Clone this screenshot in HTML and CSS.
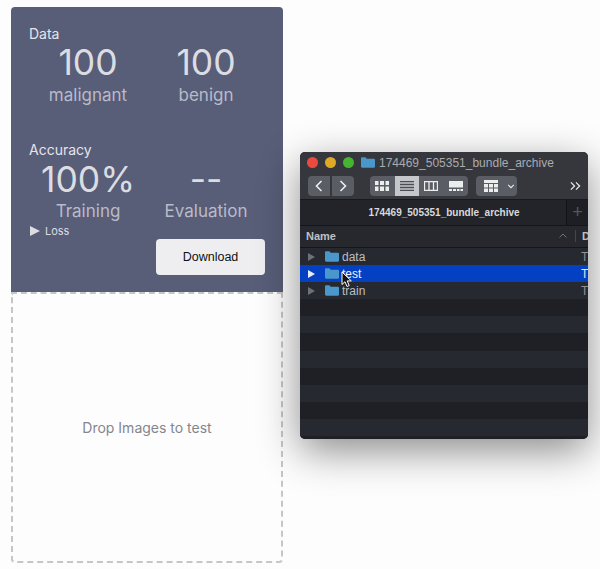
FILE: index.html
```html
<!DOCTYPE html>
<html lang="en">
<head>
  <meta charset="UTF-8">
  <title>Train classifier</title>
  <link rel="stylesheet" href="styles.css">
</head>
<body>
  <div class="column">
    <section class="panel">
      <h2 class="heading">Data</h2>
      <div class="stats">
        <div class="stat"><div class="value">100</div><div class="label">malignant</div></div>
        <div class="stat"><div class="value">100</div><div class="label">benign</div></div>
      </div>

      <h2 class="heading heading-accuracy">Accuracy</h2>
      <div class="stats stats-accuracy">
        <div class="stat"><div class="value">100%</div><div class="label">Training</div></div>
        <div class="stat"><div class="value">--</div><div class="label">Evaluation</div></div>
      </div>

      <div class="footer">
        <div class="loss"><span class="triangle"></span>Loss</div>
        <button type="button" class="download">Download</button>
      </div>
    </section>

    <div class="dropzone">Drop Images to test</div>
  </div>

  <!-- finder window dragged over the page -->
  <div class="finder">
    <div class="titlebar">
      <span class="light red"></span>
      <span class="light yellow"></span>
      <span class="light green"></span>
      <svg class="folder folder-title" viewBox="0 0 14 11"><path d="M0 1.500C0 .7.5.3 1.200.3h3.200l1.300 1.400h7c.8 0 1.300.5 1.300 1.200v6.600c0 .8-.5 1.200-1.300 1.200H1.200C.5 10.700 0 10.300 0 9.500z"/></svg>
      <span class="title">174469_505351_bundle_archive</span>
    </div>

    <div class="toolbar">
      <div class="group nav">
        <span class="tool tool-nav"><svg viewBox="0 0 12 14"><path d="M8.500 2 3.500 7l5 5"/></svg></span>
        <span class="tool tool-nav"><svg viewBox="0 0 12 14"><path d="M3.500 2l5 5-5 5"/></svg></span>
      </div>
      <div class="group views">
        <span class="tool tool-view"><svg viewBox="0 0 14 10" class="fill"><path d="M0 0h3.500v4H0zM5 0h4v4H5zM10.500 0H14v4h-3.500zM0 5.500h3.500V10H0zM5 5.500h4V10H5zM10.500 5.500H14V10h-3.500z"/></svg></span>
        <span class="tool tool-view active"><svg viewBox="0 0 14 10" class="lines"><path d="M0 .5h14M0 3.500h14M0 6.500h14M0 9.500h14"/></svg></span>
        <span class="tool tool-view"><svg viewBox="0 0 14 10" class="thin"><path d="M.5.5h13v9H.5zM5 .5v9M9.500.5v9"/></svg></span>
        <span class="tool tool-view"><svg viewBox="0 0 14 10" class="fill"><path d="M0 0h14v6.500H0zM0 8h3v2H0zM4 8h3v2H4zM8 8h2.500v2H8zM11.500 8H14v2h-2.500z"/></svg></span>
      </div>
      <div class="group sort">
        <svg class="sort-grid fill" viewBox="0 0 14 12"><path d="M0 0h14v3H0zM0 4h4v3.500H0zM5 4h4v3.500H5zM10 4h4v3.500h-4zM0 8.500h4V12H0zM5 8.500h4V12H5zM10 8.500h4V12h-4z"/></svg>
        <svg class="sort-chevron" viewBox="0 0 10 6"><path d="M1.500 1 5 4.500 8.500 1"/></svg>
      </div>
      <svg class="more" viewBox="0 0 12 10"><path d="M1 1l4 4-4 4M6.500 1l4 4-4 4"/></svg>
    </div>

    <div class="tabs">
      <div class="tab">174469_505351_bundle_archive</div>
      <div class="tab-add">+</div>
    </div>

    <div class="columns">
      <span class="col-name">Name</span>
      <svg class="col-sort" viewBox="0 0 8 5"><path d="M.5 4.500 4 1l3.500 3.500"/></svg>
      <span class="col-next">D</span>
    </div>

    <ul class="rows">
      <li class="row"><span class="arrow"></span><svg class="folder" viewBox="0 0 14 11"><path d="M0 1.500C0 .7.5.3 1.200.3h3.200l1.300 1.400h7c.8 0 1.300.5 1.300 1.200v6.600c0 .8-.5 1.200-1.300 1.200H1.200C.5 10.700 0 10.300 0 9.500z"/></svg><span class="name">data</span><span class="kind">T</span></li>
      <li class="row selected"><span class="arrow"></span><svg class="folder" viewBox="0 0 14 11"><path d="M0 1.500C0 .7.5.3 1.200.3h3.200l1.300 1.400h7c.8 0 1.300.5 1.300 1.200v6.600c0 .8-.5 1.200-1.300 1.200H1.200C.5 10.700 0 10.300 0 9.500z"/></svg><span class="name">test</span><span class="kind">T</span>
        <svg class="cursor" viewBox="0 0 11 17"><path d="M1 1v12.500l3-2.800 2 4.800 2.200-1-2-4.600h4.100z"/></svg>
      </li>
      <li class="row"><span class="arrow"></span><svg class="folder" viewBox="0 0 14 11"><path d="M0 1.500C0 .7.5.3 1.200.3h3.200l1.300 1.400h7c.8 0 1.300.5 1.300 1.200v6.600c0 .8-.5 1.200-1.300 1.200H1.200C.5 10.700 0 10.300 0 9.500z"/></svg><span class="name">train</span><span class="kind">T</span></li>
      <li class="row"></li>
      <li class="row"></li>
      <li class="row"></li>
      <li class="row"></li>
      <li class="row"></li>
      <li class="row"></li>
      <li class="row"></li>
      <li class="row"></li>
    </ul>
  </div>
</body>
</html>
```

FILE: styles.css
```css
html, body {
  height: 100%;
}

body {
  margin: 0;
  background: #fdfdfd;
  font-family: Inter, "Liberation Sans", sans-serif;
  overflow: hidden;
}

.column {
  width: 272px;
  margin: 7px 0 0 11px;
}

.panel {
  box-sizing: border-box;
  height: 285px;
  padding: 18px 18px 0;
  background: #585d78;
  border-radius: 4px 4px 0 0;
  color: #e4e5ea;
}

.heading {
  margin: 0;
  font-size: 14px;
  font-weight: 400;
  line-height: 17px;
}

.heading-accuracy {
  margin: 36px 0 1px;
}

.stats {
  display: grid;
  grid-template-columns: 118px 118px;
}

.stat {
  text-align: center;
}

.value {
  font-size: 35.500px;
  font-weight: 400;
  line-height: 42px;
  color: #dcdde3;
}

.label {
  margin-top: 1px;
  font-size: 17px;
  line-height: 20px;
  color: #b9bbc8;
}

.stats-accuracy .label {
  margin-top: 0;
}

.footer {
  display: flex;
  justify-content: space-between;
  align-items: flex-start;
}

.loss {
  display: flex;
  align-items: center;
  gap: 5px;
  margin: 3px 0 0 1px;
  font-size: 11px;
  line-height: 14px;
  color: #dcdde4;
}

.triangle {
  width: 0;
  height: 0;
  border-left: 10px solid #dcdde4;
  border-top: 5px solid transparent;
  border-bottom: 5px solid transparent;
}

.download {
  width: 109px;
  height: 36px;
  margin-top: 18px;
  border: none;
  border-radius: 4px;
  background: #eeeef1;
  color: #111;
  font-family: "Liberation Sans", sans-serif;
  font-size: 12.500px;
}

.dropzone {
  box-sizing: border-box;
  display: flex;
  align-items: center;
  justify-content: center;
  height: 271px;
  border: 2px dashed #c6c6c6;
  border-radius: 0 0 4px 4px;
  font-size: 14px;
  color: #85868d;
}

.finder {
  position: absolute;
  left: 300px;
  top: 152px;
  width: 288px;
  height: 287px;
  display: flex;
  flex-direction: column;
  overflow: hidden;
  background: #1e2026;
  border-radius: 5px;
  box-shadow: 0 12px 40px rgba(0, 0, 0, 0.45);
  font-family: "Liberation Sans", sans-serif;
  color: #d8d9dc;
}

.titlebar {
  display: flex;
  align-items: center;
  height: 21px;
  padding: 0 0 0 7px;
  background: #35373d;
}

.light {
  width: 11px;
  height: 11px;
  margin-right: 7px;
  border-radius: 50%;
}

.red { background: #ec4a41; }
.yellow { background: #e0a925; }
.green { background: #45b52f; }

.folder {
  width: 14px;
  height: 11px;
  fill: #4a97cb;
}

.folder-title {
  margin-right: 4px;
}

.title {
  font-size: 12px;
  color: #a9abb1;
}

.toolbar {
  display: flex;
  align-items: center;
  height: 26px;
  padding: 0 0 0 8px;
  background: #35373d;
}

.toolbar svg {
  fill: none;
  stroke: #eceded;
  stroke-width: 1.300;
}

.toolbar svg.fill {
  fill: #eceded;
  stroke: none;
}

.group {
  display: flex;
  height: 20px;
  border-radius: 4px;
  overflow: hidden;
}

.nav {
  gap: 2px;
  margin-right: 16px;
}

.tool {
  display: flex;
  align-items: center;
  justify-content: center;
  height: 20px;
  background: #5b5d64;
}

.tool-nav {
  width: 22px;
}

.tool-nav svg {
  width: 12px;
  height: 14px;
  stroke-width: 1.600;
}

.tool-view {
  width: 24.500px;
}

.tool-view svg {
  width: 14px;
  height: 10px;
}

.tool-view.active {
  background: #c6c7ca;
}

.tool-view.active svg {
  stroke: #4b4d53;
}

.views {
  margin-right: 8px;
}

.sort {
  align-items: center;
  gap: 9px;
  width: 41px;
  padding-left: 8px;
  box-sizing: border-box;
  background: #5b5d64;
}

.sort-grid {
  width: 14px;
  height: 12px;
  flex: none;
}

.sort-chevron {
  width: 8px;
  height: 5px;
  flex: none;
}

.more {
  width: 11px;
  height: 10px;
  margin-left: 53px;
}

.tabs {
  display: flex;
  height: 26px;
  background: #22242a;
  border-top: 1px solid #19191c;
  box-sizing: border-box;
}

.tab {
  flex: 1;
  padding-left: 22px;
  text-align: center;
  font-size: 10px;
  font-weight: 700;
  line-height: 25px;
  color: #d8d9dc;
  border-right: 1px solid #111215;
}

.tab-add {
  width: 21px;
  text-align: center;
  font-size: 18px;
  line-height: 24px;
  color: #55575c;
  background: #1d1f24;
}

.columns {
  display: flex;
  align-items: center;
  height: 23px;
  padding: 0 0 2px 6px;
  background: #26282e;
  border-top: 1px solid #15161a;
  border-bottom: 1px solid #15161a;
  box-sizing: border-box;
  font-size: 11px;
  font-weight: 700;
  color: #bfc0c4;
}

.col-name {
  flex: 1;
}

.col-sort {
  width: 8px;
  height: 5px;
  fill: none;
  stroke: #6e7075;
  margin-right: 8px;
}

.col-next {
  width: 6px;
  padding-left: 6px;
  border-left: 1px solid #45474d;
  overflow: hidden;
  line-height: 12px;
}

.rows {
  flex: 1;
  margin: 0;
  padding: 0;
  list-style: none;
  background: #1e2026;
}

.row {
  position: relative;
  display: flex;
  align-items: center;
  height: 17.100px;
  font-size: 12px;
  color: #bcbec2;
}

.row:nth-child(odd) {
  background: #272930;
}

.row:nth-child(even) {
  background: #1e2026;
}

.row.selected {
  background: #0441c2;
  color: #f2f4fa;
}

.arrow {
  width: 0;
  height: 0;
  margin: 0 10px 0 8px;
  border-left: 7px solid #6e7075;
  border-top: 4px solid transparent;
  border-bottom: 4px solid transparent;
}

.selected .arrow {
  border-left-color: #e8edf8;
}

.name {
  flex: 1;
  margin-left: 3px;
}

.kind {
  width: 7px;
  overflow: hidden;
  color: #8f9195;
}

.selected .kind {
  color: #dfe6f6;
}

.cursor {
  position: absolute;
  z-index: 1;
  left: 41px;
  top: 6px;
  width: 11px;
  height: 17px;
  fill: #111;
  stroke: #fff;
  stroke-width: 1;
}
```
